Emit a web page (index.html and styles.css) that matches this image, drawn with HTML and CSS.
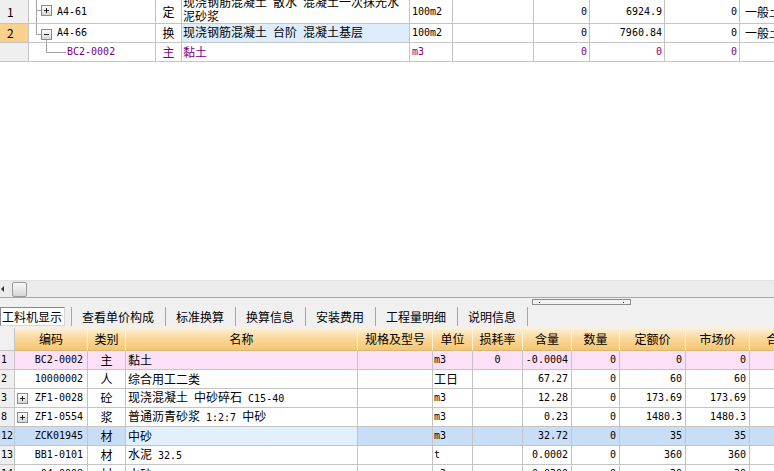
FILE: index.html
```html
<!DOCTYPE html>
<html lang="zh-CN">
<head>
<meta charset="utf-8">
<title>工料机显示</title>
<link rel="stylesheet" href="styles.css">
</head>
<body>
<svg class="defs" width="0" height="0" aria-hidden="true">
  <defs>
    <linearGradient id="boxg" x1="0" y1="0" x2="0" y2="1">
      <stop offset="0" stop-color="#ffffff"/>
      <stop offset="1" stop-color="#d4d4d4"/>
    </linearGradient>
  </defs>
</svg>
<div class="app">
  <div class="top-pane">
    <div class="grid top">
      <div class="row r-tall">
        <div class="cell rn">1</div>
        <div class="cell code">
          <svg class="tree" width="28" height="23" viewBox="0 0 28 23">
            <path d="M7.5 0V23M7.5 10.5H12" stroke="#a0a0a0" fill="none"/>
            <rect x="12.5" y="5.5" width="10" height="10" fill="url(#boxg)" stroke="#8c8c8c"/>
            <path d="M15 10.5H20M17.5 8V13" stroke="#222" fill="none"/>
          </svg>
          <span class="m">A4-61</span>
        </div>
        <div class="cell typ">定</div>
        <div class="cell name two"><span class="t">现浇钢筋混凝土<span class="m"> </span>散水<span class="m"> </span>混凝土一次抹光水<br>泥砂浆</span></div>
        <div class="cell unit m">100m2</div>
        <div class="cell"></div>
        <div class="cell num m">0</div>
        <div class="cell num m">6924.9</div>
        <div class="cell num m">0</div>
        <div class="cell last">一般土</div>
      </div>
      <div class="row">
        <div class="cell rn sel">2</div>
        <div class="cell code">
          <svg class="tree" width="28" height="18" viewBox="0 0 28 18">
            <path d="M7.5 0V10.5M7.5 10.5H12M17.5 15V18" stroke="#a0a0a0" fill="none"/>
            <rect x="12.5" y="5.5" width="10" height="10" fill="url(#boxg)" stroke="#8c8c8c"/>
            <path d="M15 10.5H20" stroke="#222" fill="none"/>
          </svg>
          <span class="m">A4-66</span>
        </div>
        <div class="cell typ">换</div>
        <div class="cell name cur"><span class="t">现浇钢筋混凝土<span class="m"> </span>台阶<span class="m"> </span>混凝土基层</span></div>
        <div class="cell unit m">100m2</div>
        <div class="cell"></div>
        <div class="cell num m">0</div>
        <div class="cell num m">7960.84</div>
        <div class="cell num m">0</div>
        <div class="cell last">一般土</div>
      </div>
      <div class="row purple">
        <div class="cell rn"></div>
        <div class="cell code">
          <svg class="tree" width="38" height="18" viewBox="0 0 38 18">
            <path d="M17.5 0V9.5M17.5 9.5H37" stroke="#a0a0a0" fill="none"/>
          </svg>
          <span class="m">BC2-0002</span>
        </div>
        <div class="cell typ">主</div>
        <div class="cell name">黏土</div>
        <div class="cell unit m">m3</div>
        <div class="cell"></div>
        <div class="cell num m">0</div>
        <div class="cell num m">0</div>
        <div class="cell num m">0</div>
        <div class="cell last"></div>
      </div>
    </div>
  </div>

  <div class="hscroll">
    <span class="arrow"></span>
    <span class="thumb"></span>
  </div>

  <div class="tabbar">
    <div class="tab active">工料机显示</div>
    <div class="tab">查看单价构成</div>
    <div class="tab">标准换算</div>
    <div class="tab">换算信息</div>
    <div class="tab">安装费用</div>
    <div class="tab">工程量明细</div>
    <div class="tab end">说明信息</div>
    <div class="splitter"><span class="dot"></span><span class="dot"></span></div>
  </div>

  <div class="grid bottom">
    <div class="row head">
      <div class="cell rn"></div>
      <div class="cell">编码</div>
      <div class="cell">类别</div>
      <div class="cell">名称</div>
      <div class="cell">规格及型号</div>
      <div class="cell">单位</div>
      <div class="cell">损耗率</div>
      <div class="cell">含量</div>
      <div class="cell">数量</div>
      <div class="cell">定额价</div>
      <div class="cell">市场价</div>
      <div class="cell">合价</div>
    </div>
    <div class="row pink">
      <div class="cell rn m">1</div>
      <div class="cell bcode"><span class="m">BC2-0002</span></div>
      <div class="cell typ">主</div>
      <div class="cell bname">黏土</div>
      <div class="cell"></div>
      <div class="cell unit m">m3</div>
      <div class="cell ctr m">0</div>
      <div class="cell num m">-0.0004</div>
      <div class="cell num m">0</div>
      <div class="cell num m">0</div>
      <div class="cell num m">0</div>
      <div class="cell"></div>
    </div>
    <div class="row">
      <div class="cell rn m">2</div>
      <div class="cell bcode"><span class="m">10000002</span></div>
      <div class="cell typ">人</div>
      <div class="cell bname">综合用工二类</div>
      <div class="cell"></div>
      <div class="cell unit">工日</div>
      <div class="cell"></div>
      <div class="cell num m">67.27</div>
      <div class="cell num m">0</div>
      <div class="cell num m">60</div>
      <div class="cell num m">60</div>
      <div class="cell"></div>
    </div>
    <div class="row">
      <div class="cell rn m">3</div>
      <div class="cell bcode">
        <svg class="box" width="11" height="11" viewBox="0 0 11 11">
          <rect x="0.5" y="0.5" width="10" height="10" fill="url(#boxg)" stroke="#8c8c8c"/>
          <path d="M3 5.5H8M5.5 3V8" stroke="#222" fill="none"/>
        </svg>
        <span class="m">ZF1-0028</span>
      </div>
      <div class="cell typ">砼</div>
      <div class="cell bname"><span class="t">现浇混凝土<span class="m"> </span>中砂碎石<span class="m"> C15-40</span></span></div>
      <div class="cell"></div>
      <div class="cell unit m">m3</div>
      <div class="cell"></div>
      <div class="cell num m">12.28</div>
      <div class="cell num m">0</div>
      <div class="cell num m">173.69</div>
      <div class="cell num m">173.69</div>
      <div class="cell"></div>
    </div>
    <div class="row">
      <div class="cell rn m">8</div>
      <div class="cell bcode">
        <svg class="box" width="11" height="11" viewBox="0 0 11 11">
          <rect x="0.5" y="0.5" width="10" height="10" fill="url(#boxg)" stroke="#8c8c8c"/>
          <path d="M3 5.5H8M5.5 3V8" stroke="#222" fill="none"/>
        </svg>
        <span class="m">ZF1-0554</span>
      </div>
      <div class="cell typ">浆</div>
      <div class="cell bname"><span class="t">普通沥青砂浆<span class="m"> 1:2:7 </span>中砂</span></div>
      <div class="cell"></div>
      <div class="cell unit m">m3</div>
      <div class="cell"></div>
      <div class="cell num m">0.23</div>
      <div class="cell num m">0</div>
      <div class="cell num m">1480.3</div>
      <div class="cell num m">1480.3</div>
      <div class="cell"></div>
    </div>
    <div class="row blue">
      <div class="cell rn m">12</div>
      <div class="cell bcode"><span class="m">ZCK01945</span></div>
      <div class="cell typ">材</div>
      <div class="cell bname focus">中砂</div>
      <div class="cell"></div>
      <div class="cell unit m">m3</div>
      <div class="cell"></div>
      <div class="cell num m">32.72</div>
      <div class="cell num m">0</div>
      <div class="cell num m">35</div>
      <div class="cell num m">35</div>
      <div class="cell"></div>
    </div>
    <div class="row">
      <div class="cell rn m">13</div>
      <div class="cell bcode"><span class="m">BB1-0101</span></div>
      <div class="cell typ">材</div>
      <div class="cell bname"><span class="t">水泥<span class="m"> 32.5</span></span></div>
      <div class="cell"></div>
      <div class="cell unit m">t</div>
      <div class="cell"></div>
      <div class="cell num m">0.0002</div>
      <div class="cell num m">0</div>
      <div class="cell num m">360</div>
      <div class="cell num m">360</div>
      <div class="cell"></div>
    </div>
    <div class="row">
      <div class="cell rn m">14</div>
      <div class="cell bcode"><span class="m">04-0008</span></div>
      <div class="cell typ">材</div>
      <div class="cell bname">水砂</div>
      <div class="cell"></div>
      <div class="cell unit m">m3</div>
      <div class="cell"></div>
      <div class="cell num m">0.0300</div>
      <div class="cell num m">0</div>
      <div class="cell num m">30</div>
      <div class="cell num m">30</div>
      <div class="cell"></div>
    </div>
  </div>
</div>
</body>
</html>
```

FILE: styles.css
```css
* {
  box-sizing: border-box;
  margin: 0;
  padding: 0;
}

html, body {
  width: 774px;
  height: 471px;
  overflow: hidden;
  background: #ffffff;
}

body {
  font-family: "Noto Sans CJK SC", "Noto Sans", sans-serif;
  font-size: 12px;
  color: #000000;
}

.defs {
  position: absolute;
  width: 0;
  height: 0;
}

.m {
  font-family: "DejaVu Sans Mono", "Liberation Mono", monospace;
  font-size: 10px;
}

.t {
  white-space: pre;
}

.app {
  display: flex;
  flex-direction: column;
  width: 774px;
  height: 471px;
  overflow: hidden;
}

/* ---------- generic grid ---------- */
.row {
  display: grid;
  height: 19px;
}

.cell {
  display: flex;
  align-items: center;
  white-space: nowrap;
  overflow: hidden;
  line-height: 12px;
  border-right: 1px solid #c4c4c4;
  border-bottom: 1px solid #c4c4c4;
}

/* ---------- top grid ---------- */
.top-pane {
  height: 280px;
  flex: none;
  overflow: hidden;
  background: #ffffff;
}

.top .row {
  grid-template-columns: 29px 127px 26px 228px 43px 81px 56px 75px 75px 100px;
  width: 840px;
}

.top .row.r-tall {
  height: 24px;
}

.top .rn {
  background: #efefef;
  padding-left: 7px;
}

.top .rn.sel {
  background: #f9d08c;
}

.top .code {
  padding: 0;
}

.tree {
  flex: none;
  display: block;
  align-self: stretch;
}

.typ {
  justify-content: center;
}

.top .name {
  padding-left: 1px;
}

.top .name.two {
  align-items: flex-end;
  padding-bottom: 1px;
}

.top .name.two .t {
  display: block;
  line-height: 12px;
}

.top .name.cur {
  background: #deedfc;
}

.unit {
  padding-left: 2px;
}

.num {
  justify-content: flex-end;
  padding-right: 2px;
}

.ctr {
  justify-content: center;
}

.last {
  padding-left: 5px;
  border-right: none;
}

.purple {
  color: #800080;
}

/* ---------- horizontal scrollbar ---------- */
.hscroll {
  height: 17px;
  flex: none;
  display: flex;
  align-items: center;
  background: #ebebeb;
  border-top: 1px solid #e2e2e2;
}

.arrow {
  width: 0;
  height: 0;
  margin-left: 1px;
  border-top: 3px solid transparent;
  border-bottom: 3px solid transparent;
  border-right: 3px solid #333333;
}

.thumb {
  width: 15px;
  height: 15px;
  margin-left: 8px;
  border: 1px solid #9a9a9a;
  border-radius: 2px;
  background: linear-gradient(to bottom, #fafafa, #d6d6d6);
}

/* ---------- tab bar ---------- */
.tabbar {
  position: relative;
  height: 31px;
  flex: none;
  display: flex;
  align-items: flex-start;
  padding-top: 9px;
  background: #f0f0f0;
  border-top: 1px solid #a8a8a8;
}

.tab {
  height: 19px;
  display: flex;
  align-items: center;
  padding: 0 11px 0 10px;
  border-left: 1px solid #a6a6a6;
  white-space: nowrap;
}

.tab.end {
  border-right: 1px solid #a6a6a6;
}

.tab.active {
  padding: 0 2px 0 1px;
  margin-right: 6px;
  border: 1px solid #8a8a8a;
  border-right-color: #d8d8d8;
  border-bottom-color: #d8d8d8;
  background: #ffffff;
}

.splitter {
  position: absolute;
  left: 532px;
  top: 1px;
  width: 99px;
  height: 6px;
  border: 1px solid #8c8c8c;
  background: #f2f2f2;
  display: flex;
  align-items: center;
  justify-content: space-between;
  padding: 0 6px;
}

.dot {
  width: 1px;
  height: 1px;
  background: #333333;
}

/* ---------- bottom grid ---------- */
.bottom .row {
  grid-template-columns: 15px 73px 38px 232px 75px 40px 50px 49px 48px 66px 64px 58px;
  width: 808px;
}

.bottom .row.head {
  height: 23px;
  background: linear-gradient(to bottom, #fdf1d9 0%, #fad89c 45%, #f5c46c 100%);
}

.head .cell {
  justify-content: center;
  border-right: 1px solid #fff3dc;
  border-bottom: 1px solid #d9b779;
}

.head .cell.rn {
  background: #f0f0f0;
  border-right-color: #c4c4c4;
  border-bottom-color: #c4c4c4;
}

.bottom .rn {
  background: #efefef;
  padding-left: 1px;
}

.bcode {
  justify-content: flex-end;
  padding: 0 4px 0 2px;
}

.bcode .box {
  flex: none;
  margin-right: auto;
  display: block;
}

.bname {
  padding-left: 2px;
}

.bottom .unit {
  padding-left: 1px;
}

.bottom .num {
  padding-right: 3px;
}

.row.pink .cell {
  background: #fce0f8;
}

.row.pink .cell.rn {
  background: #f3e4f1;
}

.row.blue .cell {
  background: #c8def7;
}

.row.blue .cell.focus {
  background: #e2effd;
}
```
